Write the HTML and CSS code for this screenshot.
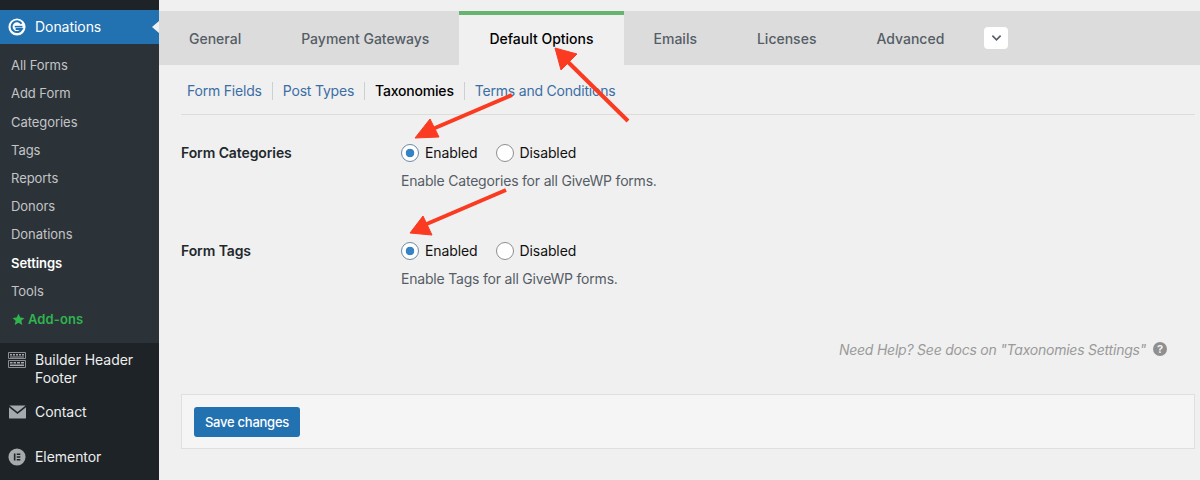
FILE: index.html
```html
<!DOCTYPE html>
<html lang="en">
<head>
    <meta charset="UTF-8">
    <title>GiveWP Settings</title>
    <link rel="stylesheet" href="styles.css">
</head>
<body>
    <aside class="sidebar">
        <a class="menu-current">
            <svg class="menu-icon" viewBox="0 0 20 20"><circle cx="10" cy="10" r="9.500" fill="#fff"/><path d="M15 6.400A6 6 0 1 0 15.300 12.300L8.500 12.300" fill="none" stroke="#2271b1" stroke-width="2.300"/><path d="M7.500 9.600h8.500" stroke="#2271b1" stroke-width="1.800"/></svg>
            <span>Donations</span>
        </a>
        <ul class="submenu">
            <li>All Forms</li>
            <li>Add Form</li>
            <li>Categories</li>
            <li>Tags</li>
            <li>Reports</li>
            <li>Donors</li>
            <li>Donations</li>
            <li class="sub-current">Settings</li>
            <li>Tools</li>
            <li class="sub-addons"><svg class="star" viewBox="0 0 20 20"><path d="M10 1l2.800 6 6.400.700-4.800 4.300 1.400 6.400L10 15.100l-5.800 3.300 1.400-6.400L.8 7.700 7.200 7z" fill="#2fb44f"/></svg>Add-ons</li>
        </ul>
        <a class="menu-item menu-builder">
            <svg class="menu-icon" viewBox="0 0 18 16"><path d="M.5.500h17v6h-17zM.5 8.500h17v7h-17z" fill="none" stroke="#8c8f94"/><path d="M2 2h2v1.500H2zM5 2h2v1.500H5zM8 2h2v1.500H8zM11 2h2v1.500h-2zM14 2h2v1.500h-2zM2 4.500h14V5.500H2zM2 10h2.500v1.500H2zM5.500 10H8v1.500H5.500zM9 10h3v1.500H9zM13 10h3v1.500h-3zM2 12.500h14V14H2z" fill="#a7aaad"/></svg>
            <span>Builder Header Footer</span>
        </a>
        <a class="menu-item menu-contact">
            <svg class="menu-icon" viewBox="0 0 18 14"><path d="M1 0h16a1 1 0 0 1 .6.200L9 7 .4.200A1 1 0 0 1 1 0zM0 2v11a1 1 0 0 0 1 1h16a1 1 0 0 0 1-1V2L9 9z" fill="#a7aaad"/></svg>
            <span>Contact</span>
        </a>
        <a class="menu-item menu-elementor">
            <svg class="menu-icon" viewBox="0 0 20 20"><circle cx="10" cy="10" r="9.500" fill="#a7aaad"/><path d="M6.500 6h1.800v8H6.500zM9.700 6h4v1.700h-4zM9.700 9.150h4v1.700h-4zM9.700 12.300h4V14h-4z" fill="#1d2327"/></svg>
            <span>Elementor</span>
        </a>
    </aside>

    <main class="content">
        <nav class="tabs">
            <a class="tab">General</a>
            <a class="tab">Payment Gateways</a>
            <a class="tab tab-active">Default Options</a>
            <a class="tab">Emails</a>
            <a class="tab">Licenses</a>
            <a class="tab">Advanced</a>
            <button class="tab-more"><svg viewBox="0 0 12 8"><path d="M1.500 1.500L6 6l4.500-4.500" fill="none" stroke="#555d66" stroke-width="1.800"/></svg></button>
        </nav>

        <ul class="subnav">
            <li><a>Form Fields</a></li>
            <li><a>Post Types</a></li>
            <li><a class="subnav-current">Taxonomies</a></li>
            <li><a>Terms and Conditions</a></li>
        </ul>

        <section class="form-row row-categories">
            <div class="row-label">Form Categories</div>
            <div>
                <div class="radios">
                    <span class="radio radio-on">Enabled</span>
                    <span class="radio">Disabled</span>
                </div>
                <p class="desc">Enable Categories for all GiveWP forms.</p>
            </div>
        </section>

        <section class="form-row row-tags">
            <div class="row-label">Form Tags</div>
            <div>
                <div class="radios">
                    <span class="radio radio-on">Enabled</span>
                    <span class="radio">Disabled</span>
                </div>
                <p class="desc">Enable Tags for all GiveWP forms.</p>
            </div>
        </section>

        <div class="help">
            <em>Need Help? See docs on "Taxonomies Settings"</em>
            <span class="help-icon">?</span>
        </div>

        <div class="save-box">
            <button class="save-btn">Save changes</button>
        </div>
    </main>

    <!-- red annotation arrows drawn over the screenshot -->
    <svg class="arrows" viewBox="0 0 1200 480">
        <g fill="#fb3a22" stroke="#fb3a22">
            <path d="M628 121L566 60" fill="none" stroke-width="4"/>
            <path d="M555 48L561 70L577 54z"/>
            <path d="M512 95L428 131" fill="none" stroke-width="4"/>
            <path d="M415 138L430 119L439 137z"/>
            <path d="M506 190L422 226" fill="none" stroke-width="4"/>
            <path d="M410 233L423 216L432 235z"/>
        </g>
    </svg>
</body>
</html>
```

FILE: styles.css
```css
* {
    box-sizing: border-box;
}
html, body {
    height: 480px;
    overflow: hidden;
}
body {
    margin: 0;
    display: flex;
    position: relative;
    font-family: Inter, "Liberation Sans", sans-serif;
    font-size: 13px;
    letter-spacing: -0.05px;
    background-color: #f0f0f0;
    color: #23282d;
}

/* admin sidebar */
.sidebar {
    width: 159px;
    height: 480px;
    flex-shrink: 0;
    padding-top: 10px;
    background: #1d2327;
    color: #eee;
    font-size: 14px;
}
.menu-current, .menu-item {
    display: flex;
    padding-left: 8px;
    line-height: 18px;
}
.menu-current {
    position: relative;
    height: 34px;
    align-items: center;
    background: #2271b1;
    color: #fff;
}
.menu-current::after {
    content: "";
    position: absolute;
    right: 0;
    top: 11px;
    border: 6px solid transparent;
    border-left-width: 0;
    border-right: 7px solid #f0f0f0;
}
.menu-icon {
    width: 18px;
    height: 18px;
    flex-shrink: 0;
    margin-right: 9px;
}
.submenu {
    list-style: none;
    margin: 0;
    padding: 7.2px 0 9.8px;
    background: #2c3338;
    color: #c3c4c7;
    font-size: 13px;
}
.submenu li {
    padding-left: 11px;
    line-height: 28.2px;
    height: 28.2px;
}
.sub-current {
    color: #fff;
    font-weight: 600;
}
.sub-addons {
    color: #2fb44f;
    font-weight: 600;
    letter-spacing: 0.1px;
}
.star {
    width: 13px;
    height: 13px;
    margin: 0 3px 0 1px;
    vertical-align: -2px;
}
.menu-builder {
    padding-top: 8px;
}
.menu-builder .menu-icon {
    height: 16px;
    margin-top: 1px;
}
.menu-contact {
    padding-top: 16px;
}
.menu-contact .menu-icon {
    width: 17px;
    height: 14px;
    margin: 2px 9px 0 1px;
}
.menu-elementor {
    padding-top: 27px;
}

/* main settings area */
.content {
    flex: 1;
    min-width: 0;
    padding-top: 11px;
}
.tabs {
    display: flex;
    align-items: center;
    height: 54px;
    background: #dcdcdc;
}
.tab {
    display: flex;
    align-items: center;
    height: 54px;
    padding: 0 30px;
    color: #555d66;
    font-size: 14px;
    font-weight: 500;
    letter-spacing: 0;
}
.tab-active {
    padding-bottom: 4px;
    border-top: 4px solid #68b36f;
    background: #f0f0f0;
    color: #000;
}
.tab-more {
    display: flex;
    align-items: center;
    justify-content: center;
    width: 24px;
    height: 22px;
    margin-left: 10px;
    padding: 0;
    border: none;
    border-radius: 4px;
    background: #fff;
}
.tab-more svg {
    width: 11px;
    height: 8px;
}

.subnav {
    display: flex;
    list-style: none;
    height: 50px;
    margin: 0 5px 0 22px;
    padding: 17px 0 0 6px;
    border-bottom: 1px solid #dcdcdc;
    font-size: 14px;
    line-height: 18px;
    letter-spacing: -0.2px;
}
.subnav li {
    height: 18px;
}
.subnav li + li {
    margin-left: 10px;
    padding-left: 10px;
    border-left: 1px solid #ccd0d4;
}
.subnav a {
    color: #3b6ea5;
}
.subnav .subnav-current {
    color: #000;
    font-weight: 500;
}

.form-row {
    display: grid;
    grid-template-columns: 220px 1fr;
    margin-left: 22px;
}
.row-categories {
    padding-top: 29px;
}
.row-tags {
    padding-top: 52px;
}
.row-label {
    font-size: 14px;
    line-height: 18px;
    font-weight: 600;
    color: #23282d;
    letter-spacing: -0.1px;
}
.radios {
    display: flex;
    gap: 18px;
    height: 18px;
    font-size: 14px;
    line-height: 18px;
    color: #111;
    letter-spacing: -0.1px;
}
.radio {
    display: flex;
    align-items: center;
}
.radio::before {
    content: "";
    width: 16px;
    height: 16px;
    margin-right: 6px;
    border: 1px solid #8c8f94;
    border-radius: 50%;
    background: #fff;
}
.radio-on::before {
    background: radial-gradient(circle, #3582c4 0 4px, #fff 4.6px);
    border-color: #6f8aa3;
}
.desc {
    margin: 10px 0 0;
    font-size: 14px;
    line-height: 18px;
    color: #555d66;
    letter-spacing: -0.2px;
}

.help {
    display: flex;
    align-items: center;
    justify-content: flex-end;
    gap: 7px;
    height: 18px;
    margin: 52px 33px 0 0;
    font-size: 14px;
    color: #9a9a9a;
    letter-spacing: -0.23px;
}
.help-icon {
    width: 14px;
    height: 14px;
    border-radius: 50%;
    background: #8f8f8f;
    color: #f0f0f0;
    font-size: 11px;
    font-weight: 700;
    line-height: 14px;
    text-align: center;
}

.save-box {
    height: 55px;
    margin: 36px 5px 0 22px;
    padding: 12px;
    background: #f5f5f5;
    border: 1px solid #dfdfdf;
}
.save-btn {
    display: block;
    width: 106px;
    height: 30px;
    padding: 0;
    border: none;
    border-radius: 3px;
    background: #2271b1;
    color: #fff;
    font-family: inherit;
    font-size: 13px;
    font-weight: 500;
    letter-spacing: -0.25px;
}

.arrows {
    position: absolute;
    left: 0;
    top: 0;
    width: 1200px;
    height: 480px;
    pointer-events: none;
}
```
